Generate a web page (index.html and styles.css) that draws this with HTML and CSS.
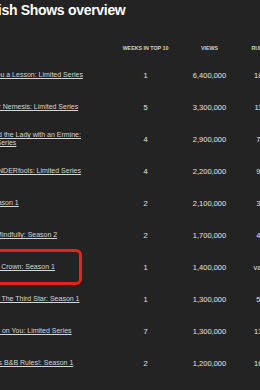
FILE: index.html
```html
<!DOCTYPE html>
<html lang="en">
<head>
<meta charset="utf-8">
<title>Non-English Shows overview</title>
<link rel="stylesheet" href="styles.css">
</head>
<body>
<div class="page">
  <h1 class="title">Non-English Shows overview</h1>
  <div class="table">
    <div class="row head">
      <div class="cell name"></div>
      <div class="cell num">Weeks in Top 10</div>
      <div class="cell num">Views</div>
      <div class="cell num">Runtime</div>
    </div>
    <div class="row">
      <div class="cell name"><a href="#">Teach You a Lesson: Limited Series</a></div>
      <div class="cell num">1</div>
      <div class="cell num">6,400,000</div>
      <div class="cell num">18:40</div>
    </div>
    <div class="row">
      <div class="cell name"><a href="#">Our Dear Nemesis: Limited Series</a></div>
      <div class="cell num">5</div>
      <div class="cell num">3,300,000</div>
      <div class="cell num">11:21</div>
    </div>
    <div class="row">
      <div class="cell name"><a href="#">Anna and the Lady with an Ermine: Limited Series</a></div>
      <div class="cell num">4</div>
      <div class="cell num">2,900,000</div>
      <div class="cell num">7:50</div>
    </div>
    <div class="row">
      <div class="cell name"><a href="#">The WONDERfools: Limited Series</a></div>
      <div class="cell num">4</div>
      <div class="cell num">2,200,000</div>
      <div class="cell num">9:45</div>
    </div>
    <div class="row">
      <div class="cell name"><a href="#">Lulu: Season 1</a></div>
      <div class="cell num">2</div>
      <div class="cell num">2,100,000</div>
      <div class="cell num">3:12</div>
    </div>
    <div class="row">
      <div class="cell name"><a href="#">Murder Mindfully: Season 2</a></div>
      <div class="cell num">2</div>
      <div class="cell num">1,700,000</div>
      <div class="cell num">4:20</div>
    </div>
    <div class="row">
      <div class="cell name"><a href="#">The Lost Crown: Season 1</a></div>
      <div class="cell num">1</div>
      <div class="cell num">1,400,000</div>
      <div class="cell num">varies</div>
    </div>
    <div class="row">
      <div class="cell name"><a href="#">Cosmos: The Third Star: Season 1</a></div>
      <div class="cell num">1</div>
      <div class="cell num">1,300,000</div>
      <div class="cell num">5:35</div>
    </div>
    <div class="row">
      <div class="cell name"><a href="#">Crushing on You: Limited Series</a></div>
      <div class="cell num">7</div>
      <div class="cell num">1,300,000</div>
      <div class="cell num">13:30</div>
    </div>
    <div class="row">
      <div class="cell name"><a href="#">Monster's B&amp;B Rules!: Season 1</a></div>
      <div class="cell num">2</div>
      <div class="cell num">1,200,000</div>
      <div class="cell num">16:48</div>
    </div>
  </div>
</div>
<div class="highlight"></div>
</body>
</html>
```

FILE: styles.css
```css
html, body {
  margin: 0;
  padding: 0;
  background: #232323;
  overflow: hidden;
}

body {
  width: 260px;
  height: 390px;
  position: relative;
  font-family: "Liberation Sans", Arial, sans-serif;
  color: #e8e8e8;
}

.page {
  margin-left: -28px;
  width: 314px;
}

.title {
  margin: 0 0 0 -34px;
  padding-top: 1px;
  font-size: 14px;
  line-height: 18px;
  font-weight: 700;
  letter-spacing: -0.3px;
  color: #ffffff;
  white-space: nowrap;
}

.table {
  margin-top: 18px;
}

.row {
  display: grid;
  grid-template-columns: 141px 65px 63px 45px;
  align-items: center;
  height: 32px;
}

.row.head {
  height: 22px;
}

.cell {
  white-space: nowrap;
}

.name {
  padding-right: 26px;
  white-space: normal;
  font-size: 7px;
  line-height: 8px;
}

.name a {
  color: #d6d6d6;
  text-decoration: underline;
  text-decoration-thickness: 1px;
  text-underline-offset: 1px;
}

.num {
  text-align: center;
  font-size: 7.5px;
  line-height: 9px;
  color: #e4e4e4;
}

.head .num {
  font-size: 5.3px;
  font-weight: 700;
  text-transform: uppercase;
  color: #d0d0d0;
}

.highlight {
  position: absolute;
  left: -12px;
  top: 249px;
  width: 88px;
  height: 30px;
  border: 3px solid #e2231e;
  border-radius: 6px;
}
```
